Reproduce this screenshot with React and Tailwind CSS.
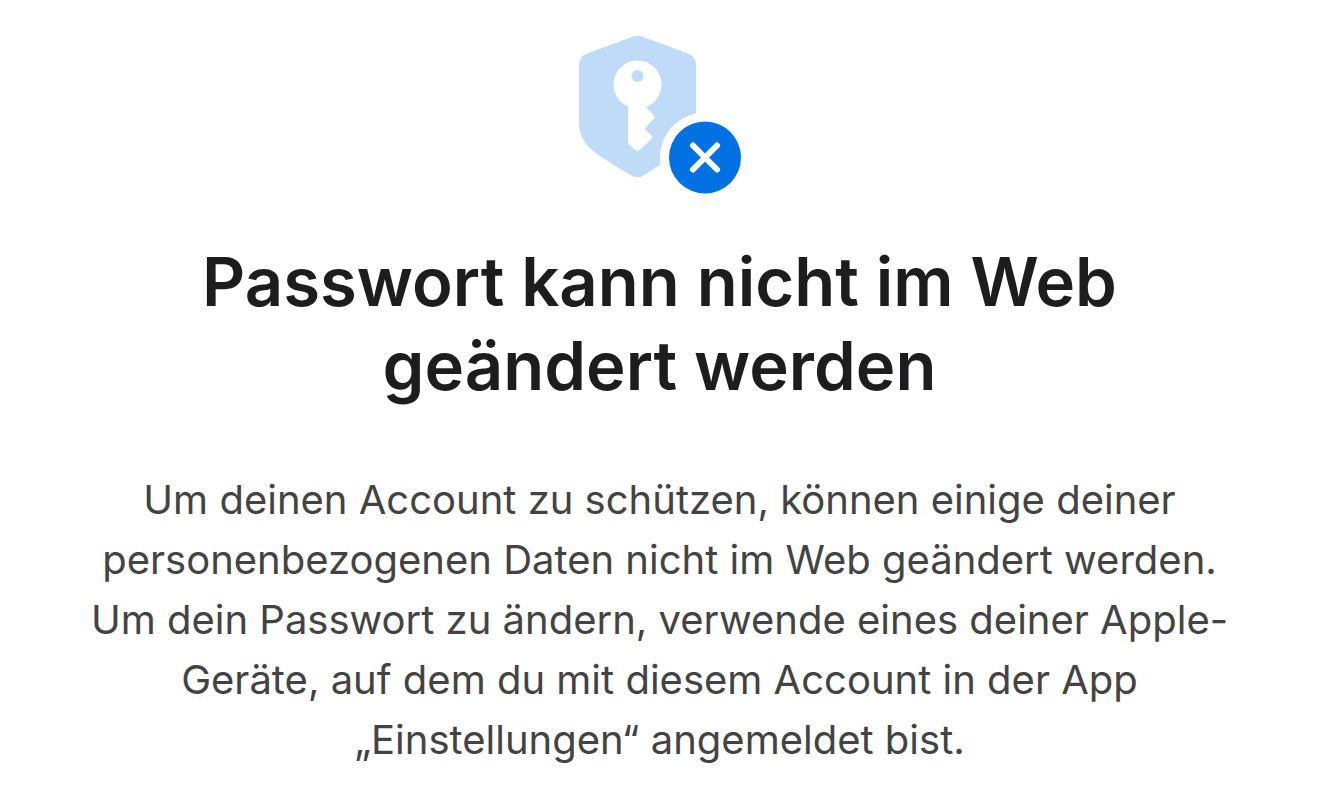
import React from "react";

const ShieldKeyIcon = () => (
  <svg viewBox="0 0 162 160" className="h-[160px] w-[162px]" aria-hidden="true">
    <path
      d="M53.500 0.800Q58.500 -1 63.500 0.800L109 17.500Q117 20.500 117 29V87C117 101 110 111 98 118C87 125 77 131.500 64 139.700Q58.500 143 53 139.700C40 132.500 30 126 19 118.500C7 110 0 101 0 86V29Q0 20.500 8 17.500Z"
      fill="#c0dbf7"
    />
    {/* key */}
    <circle cx="58.500" cy="48.500" r="24" fill="#fff" />
    <path
      d="M49 68H64L67 71L74.800 79.500Q76.200 81.300 74.800 83L66.500 91.500Q65.500 93 66.500 94L72.800 100Q74 101.300 72.800 102.800L60.500 114.300Q58.500 116 56.500 114.300L50.500 109Q49 107.500 49 106Z"
      fill="#fff"
    />
    <circle cx="58.500" cy="40" r="6" fill="#c0dbf7" />
    {/* badge */}
    <circle cx="126" cy="121.500" r="45" fill="#fff" />
    <circle cx="126" cy="121.500" r="36" fill="#0071e3" />
    <path d="M114 109.500L138 133.500M138 109.500L114 133.500" stroke="#fff" strokeWidth="6" strokeLinecap="round" />
  </svg>
);

const App = () => {
  return (
    <main className="flex flex-col items-center bg-white px-20 pt-9 pb-10 text-center font-['Inter',sans-serif]">
      <ShieldKeyIcon />
      <h1 className="mt-11 max-w-[1000px] text-[67px] leading-[84px] font-semibold text-[#1d1d1f]">
        Passwort kann nicht im Web geändert werden
      </h1>
      <p className="mt-[62px] max-w-[1160px] text-[40px] leading-[60px] text-[#434344]">
        Um deinen Account zu schützen, können einige deiner personenbezogenen Daten nicht im Web geändert werden. Um dein
        Passwort zu ändern, verwende eines deiner Apple-Geräte, auf dem du mit diesem Account in der App „Einstellungen“
        angemeldet bist.
      </p>
    </main>
  );
};

export default App;
